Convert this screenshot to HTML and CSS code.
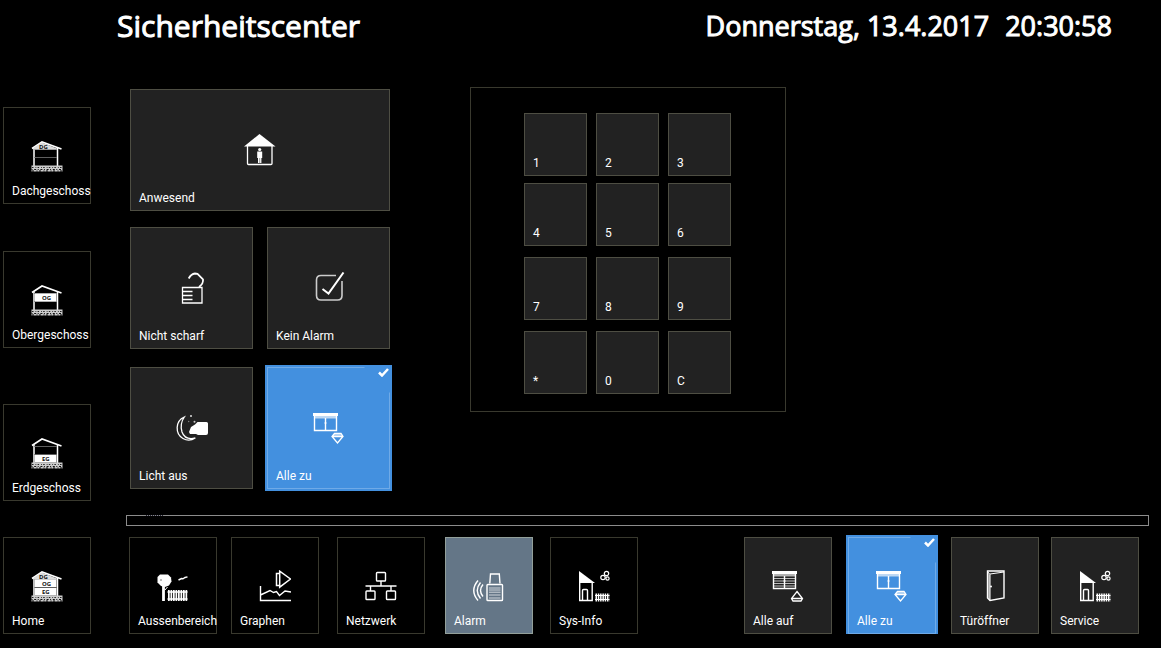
FILE: index.html
```html
<!doctype html>
<html lang="de">
  <head>
    <meta charset="UTF-8" />
    <title>Sicherheitscenter</title>
    <link rel="stylesheet" href="styles.css">
  </head>
  <body>
    <svg class="sprite" aria-hidden="true">
      <defs>
        <symbol id="house" viewBox="0 0 32 32">
          <path d="M1 8.500 11 2l19.500 7" fill="none" stroke="#fff" stroke-width="1.600" />
          <path d="M3 7.500V26M26.500 8V26" fill="none" stroke="#fff" stroke-width="1.500" />
          <path d="M3 9.500h23M3 17.500h23" stroke="#777" stroke-width=".8" />
          <path d="M.5 25.500h31V31.500H.5z" fill="#ccc" />
          <path d="M1 27.500h30" stroke="#222" stroke-width="1" stroke-dasharray="1.500 2 .8 1.300" />
          <path d="M.5 29.500h30" stroke="#111" stroke-width="1" stroke-dasharray="1 1.700 2 1.500" />
          <path d="M1 31h30" stroke="#000" stroke-width="1" stroke-dasharray="2 2.500 1 1.500" />
        </symbol>
        <symbol id="window" viewBox="0 0 32 32">
          <path d="M0 1h25v3H0z" fill="#fff" />
          <path d="M1 4h23v2.500H1z" fill="#fff" opacity=".65" />
          <path d="M1.500 4v14.500h22V4M12.500 6v12.500" fill="none" stroke="#fff" stroke-width="1.400" />
          <circle cx="12.500" cy="11" r="1" fill="#fff" />
        </symbol>
        <symbol id="close" viewBox="0 0 32 32">
          <use href="#window" />
          <path d="M21.500 21.500h6.500l2 3-5.500 6.500-5.500-6.500zM19 24.500h11" fill="none" stroke="#fff" stroke-width="1.300" />
          <path d="M21.500 21.500h6.500l2 3H19z" fill="#fff" opacity=".5" />
        </symbol>
        <symbol id="open" viewBox="0 0 32 32">
          <use href="#window" />
          <path d="M2 8.500h21M2 11h21M2 13.500h21M2 16h21" stroke="#fff" opacity=".7" stroke-width="1.200" />
          <path d="m25 21.500 5.500 7-1.500 2.500h-8l-1.500-2.500zM19.500 28.500h11" fill="none" stroke="#fff" stroke-width="1.300" />
        </symbol>
        <symbol id="service" viewBox="0 0 32 32">
          <path d="M1 1l16 12H1z" fill="#fff" />
          <path d="M1.700 13v17.500h12.500V13M4.500 30v-9.500q0-1 1-1h3q1 0 1 1V30" fill="none" stroke="#fff" stroke-width="1.400" />
          <path d="M17 25.500h14.500M17 29.500h14.500" stroke="#fff" stroke-width="1.200" />
          <path d="M17.500 27.500h14" stroke="#fff" stroke-width="8" stroke-dasharray="1.500 .8" />
          <g fill="none" stroke="#fff" stroke-width="1.200">
            <circle cx="28.500" cy="3.500" r="2.200" />
            <circle cx="25" cy="7.500" r="2.200" />
            <circle cx="29.500" cy="8.500" r="1.600" />
          </g>
        </symbol>
      </defs>
    </svg>

    <header class="header">
      <h1>Sicherheitscenter</h1>
      <div class="clock"><span>Donnerstag, 13.4.2017</span><span>20:30:58</span></div>
    </header>

    <main class="main">
      <nav class="floors">
        <button class="tile">
          <svg class="icon" viewBox="0 0 32 32">
            <use href="#house" />
            <path d="M3 9.500V7.500L11 2.500 26 8.500v1z" fill="#ddd" />
            <text x="8" y="8.800">DG</text>
          </svg>
          <span class="label">Dachgeschoss</span>
        </button>
        <button class="tile">
          <svg class="icon" viewBox="0 0 32 32">
            <use href="#house" />
            <path d="M4 9.500h21.500v8H4z" fill="#fff" />
            <text x="11" y="15.500">OG</text>
          </svg>
          <span class="label">Obergeschoss</span>
        </button>
        <button class="tile">
          <svg class="icon" viewBox="0 0 32 32">
            <use href="#house" />
            <path d="M4 18h21.500v7.500H4z" fill="#fff" />
            <text x="11" y="24">EG</text>
          </svg>
          <span class="label">Erdgeschoss</span>
        </button>
      </nav>

      <section class="status">
        <button class="tile dark wide">
          <svg class="icon" viewBox="0 0 32 32">
            <path d="M15.500 0 31.500 12.500H0z" fill="#fff" />
            <path d="M3.500 12v17.500q0 1 1 1h22.500q1 0 1-1V12" fill="none" stroke="#fff" stroke-width="1.300" />
            <circle cx="15.700" cy="15.500" r="1.600" fill="#fff" />
            <path d="M13.200 17.500h5v6.500h-.8v5h-3.400v-5h-.8z" fill="#fff" />
            <path d="M15.700 24v5" stroke="#777" stroke-width=".7" />
          </svg>
          <span class="label">Anwesend</span>
        </button>
        <button class="tile dark">
          <svg class="icon" viewBox="0 0 32 32">
            <path d="M6.500 15.500h19.500v15.500H6.500zM7 19.500h9.500M7 23.500h9.500M7 27.500h9.500" fill="none" stroke="#fff" stroke-width="1.300" />
            <path d="M12.700 6.500Q15 2 19 1.500l2.500.3 5.500 5.700q.6 4-4 7.500" fill="none" stroke="#fff" stroke-width="1.800" />
          </svg>
          <span class="label">Nicht scharf</span>
        </button>
        <button class="tile dark">
          <svg class="icon" viewBox="0 0 32 32">
            <path d="M23 3.500H8q-4.500 0-4.500 4.500v15.500q0 4.500 4.500 4.500h16.500q4.500 0 4.500-4.500V9" fill="none" stroke="#ccc" stroke-width="1.600" />
            <path d="m9.500 17 6 4.500 15-21" fill="none" stroke="#fff" stroke-width="2" />
          </svg>
          <span class="label">Kein Alarm</span>
        </button>
        <button class="tile dark">
          <svg class="icon" viewBox="0 0 32 32">
            <path d="M8.300 5C-1 9-1 22 7 26.500q6 3.500 12.300-.5Q9 28.500 6 20 3.500 12 8.300 5z" fill="none" stroke="#fff" stroke-width="1.300" />
            <path d="M13 20l2-5 4-2.500 2.500-2.500h9q1.500 0 1.500 1.500V21q0 2-2 2h-8l-2-1h-6z" fill="#fff" />
            <circle cx="15" cy="4" r="1" fill="#ddd" />
            <circle cx="12.700" cy="9.500" r=".7" fill="#888" />
            <circle cx="18.500" cy="9.800" r="1" fill="#ccc" />
          </svg>
          <span class="label">Licht aus</span>
        </button>
        <button class="tile selected">
          <svg class="icon" viewBox="0 0 32 32"><use href="#close" /></svg>
          <span class="label">Alle zu</span>
          <svg class="check" viewBox="0 0 11 9"><path d="m1 4.500 3 3L10 1" /></svg>
        </button>
      </section>

      <section class="keypad">
        <button class="tile dark"><span class="label">1</span></button>
        <button class="tile dark"><span class="label">2</span></button>
        <button class="tile dark"><span class="label">3</span></button>
        <button class="tile dark"><span class="label">4</span></button>
        <button class="tile dark"><span class="label">5</span></button>
        <button class="tile dark"><span class="label">6</span></button>
        <button class="tile dark"><span class="label">7</span></button>
        <button class="tile dark"><span class="label">8</span></button>
        <button class="tile dark"><span class="label">9</span></button>
        <button class="tile dark"><span class="label">*</span></button>
        <button class="tile dark"><span class="label">0</span></button>
        <button class="tile dark"><span class="label">C</span></button>
      </section>
    </main>

    <div class="message"></div>

    <nav class="bottom">
      <button class="tile">
        <svg class="icon" viewBox="0 0 32 32">
          <use href="#house" />
          <path d="M3 9.500V7.500L11 2.500 26 8.500v1z" fill="#ddd" />
          <path d="M4 9.500h21.500v7.500H4zM4 18h21.500v7.500H4z" fill="#fff" />
          <text x="8" y="8.800">DG</text>
          <text x="11" y="15.500">OG</text>
          <text x="11" y="24">EG</text>
        </svg>
        <span class="label">Home</span>
      </button>
      <button class="tile">
        <svg class="icon" viewBox="0 0 32 32">
          <path d="M3 4.500h8l3 3 .5 4-2.500 4-4 1.500-4-1-3.500-3.500V7z" fill="#fff" />
          <path d="M3 10h2" stroke="#555" stroke-width=".8" />
          <path d="M6.500 16v15" stroke="#fff" stroke-width="2.800" />
          <path d="m8 20 2.500-3" stroke="#fff" />
          <path d="M10.500 22h20M10.500 29h20" stroke="#fff" stroke-width="1.500" />
          <path d="M11 25.500h19.500" stroke="#fff" stroke-width="11" stroke-dasharray="1.700 .8" />
          <path d="m21.500 10 3-1.500 1.500.3L28 7.500l2.500-.7" fill="none" stroke="#fff" stroke-width="1.400" />
        </svg>
        <span class="label">Aussenbereich</span>
      </button>
      <button class="tile">
        <svg class="icon" viewBox="0 0 32 32">
          <path d="M1.500 16v14.500h30.500M1.500 25l9.500-4.500 3.500 2 3-1 3 4 5.500-4.500 6 1" fill="none" stroke="#fff" stroke-width="1.400" />
          <path d="M20.500 3.500h-3v12h3M20.700 1.200v16L31.500 9z" fill="none" stroke="#fff" stroke-width="1.500" />
        </svg>
        <span class="label">Graphen</span>
      </button>
      <button class="tile">
        <svg class="icon" viewBox="0 0 32 32">
          <g fill="none" stroke="#fff" stroke-width="1.400">
            <rect x="11.500" y="2.500" width="9" height="8.500" rx=".8" />
            <rect x="1" y="21" width="9" height="8.500" rx=".8" />
            <rect x="21.500" y="21" width="9" height="8.500" rx=".8" />
            <path d="M.5 16h31M16 11v5M5.500 16v5M26 16v5" />
          </g>
        </svg>
        <span class="label">Netzwerk</span>
      </button>
      <button class="tile active">
        <svg class="icon" viewBox="0 0 32 32">
          <g fill="none" stroke="#fff" stroke-width="1.400">
            <path d="M16.800 13.500 17.500 4h8.800l.7 9.500" />
            <rect x="14" y="14.500" width="15.500" height="16" rx=".8" />
            <path d="M5 10.500q-8.500 10 0 20M7.500 12.500q-6.500 8 0 16M10 14.500q-5 6 0 12" />
          </g>
          <path d="M16 18h11.500M16 20h11.500M16 22.200h11.500M16 25h11.500M16 28h11.500" stroke="#fff" opacity=".7" />
        </svg>
        <span class="label">Alarm</span>
      </button>
      <button class="tile">
        <svg class="icon" viewBox="0 0 32 32"><use href="#service" /></svg>
        <span class="label">Sys-Info</span>
      </button>
      <button class="tile dark">
        <svg class="icon" viewBox="0 0 32 32"><use href="#open" /></svg>
        <span class="label">Alle auf</span>
      </button>
      <button class="tile selected">
        <svg class="icon" viewBox="0 0 32 32"><use href="#close" /></svg>
        <span class="label">Alle zu</span>
        <svg class="check" viewBox="0 0 11 9"><path d="m1 4.500 3 3L10 1" /></svg>
      </button>
      <button class="tile dark">
        <svg class="icon" viewBox="0 0 32 32">
          <g fill="none" stroke="#fff" stroke-width="1.400">
            <path d="M8.500 1h16.500v27l-14 2.500-2.500-2.500z" />
            <path d="M8.500 1.500 11 4.500v26M11 4l14-2" stroke-width="1" />
          </g>
          <path d="M9 2.500l2 2V30l-2-2z" fill="#fff" opacity=".5" />
          <circle cx="12" cy="16.500" r="1" fill="#fff" />
        </svg>
        <span class="label">Türöffner</span>
      </button>
      <button class="tile dark">
        <svg class="icon" viewBox="0 0 32 32"><use href="#service" /></svg>
        <span class="label">Service</span>
      </button>
    </nav>
  </body>
</html>
```

FILE: styles.css
```css
body {
  margin: 0;
  padding: 0 0 0 3px;
  background: #000;
  color: #fff;
  font-family: "Open Sans", "Noto Sans", sans-serif;
}
.sprite {
  display: block;
  width: 0;
  height: 0;
}
.header {
  display: flex;
  justify-content: space-between;
  padding: 6px 49px 41px 114px;
  line-height: 40px;
  white-space: nowrap;
  -webkit-text-stroke: 1px #fff;
}
h1 {
  margin: 0;
  font-size: 30px;
  font-weight: 400;
}
.clock {
  display: flex;
  gap: 16px;
  font-size: 27px;
}
.main {
  display: flex;
  align-items: flex-start;
  min-height: 428px;
}

/* tiles */
.tile {
  position: relative;
  display: grid;
  box-sizing: border-box;
  width: 88px;
  height: 97px;
  padding: 0;
  border: 1px solid #39392e;
  background: #000;
  color: #fff;
  font-family: Roboto, "Open Sans", sans-serif;
  font-size: 12px;
  cursor: pointer;
}
.dark {
  background: #222;
  border-color: #4e4e43;
}
.active {
  background: #647687;
  border-color: #93a09a;
}
.selected {
  background: #4390df;
  border-color: #6faae7;
  outline: 2px solid #4390df;
}
/* corner that holds the check mark */
.selected::before {
  content: "";
  position: absolute;
  top: -1px;
  right: -1px;
  border: 13px solid #4390df;
  border-left-color: transparent;
  border-bottom-color: transparent;
}
.check {
  position: absolute;
  top: 0;
  right: 0;
  width: 11px;
  height: 9px;
}
.check path {
  fill: none;
  stroke: #fff;
  stroke-width: 2.5;
}
.icon,
.label {
  grid-area: 1 / 1;
}
.icon {
  place-self: center;
  width: 32px;
  height: 32px;
}
.icon text {
  font-family: "Open Sans", sans-serif;
  font-size: 6px;
  font-weight: 700;
  fill: #111;
}
.label {
  place-self: end start;
  padding: 0 0 4px 8px;
  line-height: 16px;
  white-space: nowrap;
}

.floors {
  display: grid;
  grid-template-rows: 144px 153px auto;
  margin-top: 20px;
}
.status {
  display: grid;
  grid-template-columns: 123px 123px;
  grid-template-rows: 138px 140px auto;
  column-gap: 14px;
  margin: 2px 80px 0 39px;
}
.status .tile {
  width: auto;
  height: 122px;
}
.status .wide {
  grid-column: span 2;
}
.keypad {
  display: grid;
  grid-template-columns: repeat(3, 63px);
  grid-template-rows: 70px 74px 74px 63px;
  column-gap: 9px;
  padding: 25px 54px 17px 53px;
  border: 1px solid #39392e;
}
.keypad .tile {
  width: 63px;
  height: 63px;
}

.message {
  position: relative;
  height: 9px;
  margin: 0 12px 0 123px;
  border: 1px solid #8c8c8c;
}
.message::before {
  content: "";
  position: absolute;
  top: -1px;
  left: 19px;
  width: 17px;
  border-top: 1px dotted #223;
}
.bottom {
  display: grid;
  grid-template-columns: 126px 102px 106px 108px 105px 1fr 104px 103px 100px 88px;
  margin: 11px 22px 0 0;
}
```
